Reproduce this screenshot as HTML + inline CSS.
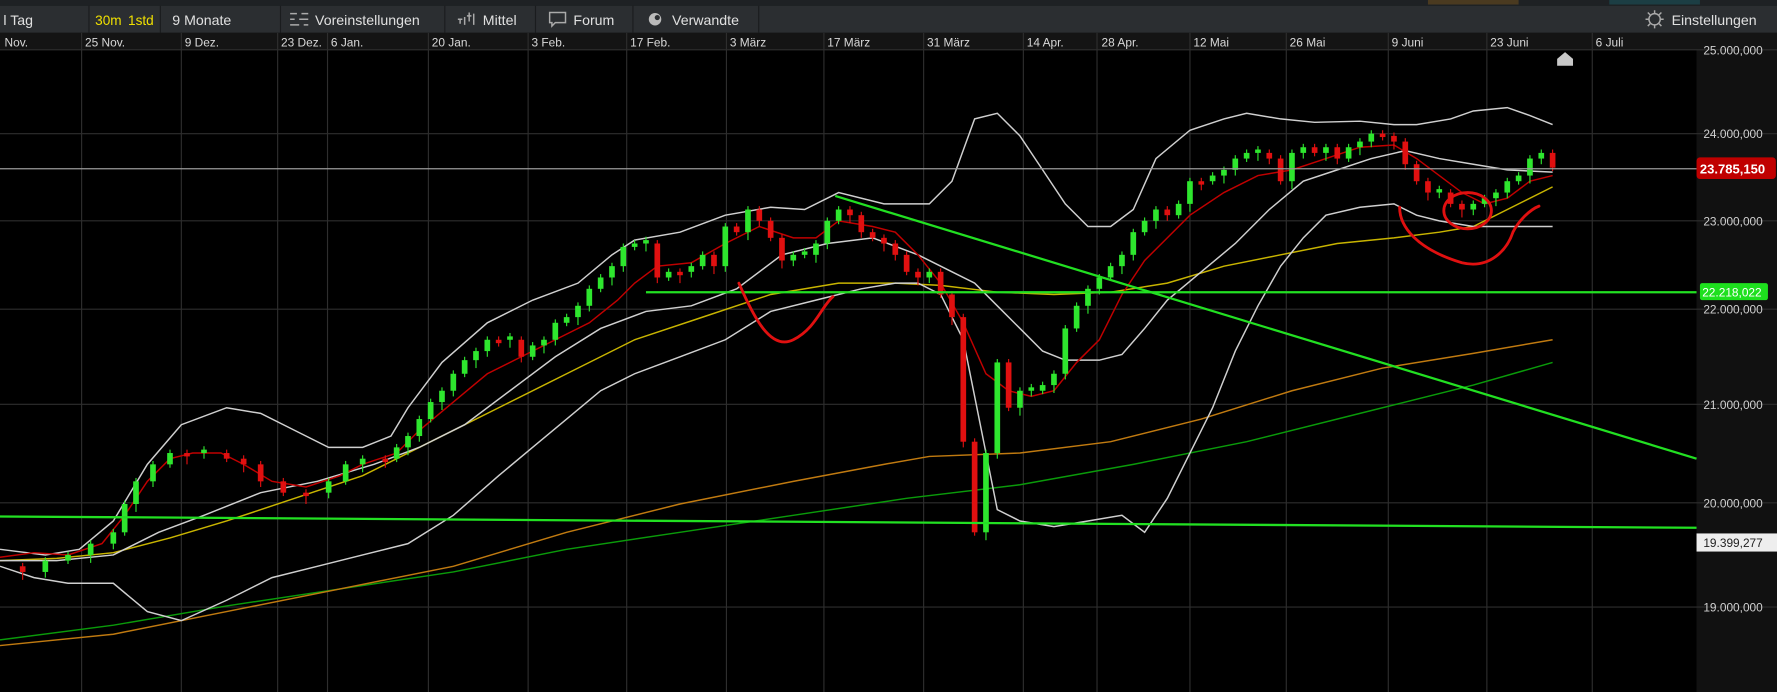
<!DOCTYPE html>
<html><head><meta charset="utf-8"><style>
html,body{margin:0;padding:0;background:#000;width:1777px;height:692px;overflow:hidden}
svg{display:block}
text{font-family:"Liberation Sans",sans-serif}
</style></head><body>
<svg id="s" width="1777" height="692" viewBox="0 0 1568 611" preserveAspectRatio="none" xmlns="http://www.w3.org/2000/svg">
<rect x="0" y="0" width="1568" height="611" fill="#000"/>
<rect x="0" y="0" width="1568" height="5" fill="#1e2124"/>
<rect x="1260" y="0" width="80" height="4" fill="#4a3a20"/><rect x="1420" y="0" width="80" height="4" fill="#1c3e44"/>
<rect x="0" y="5" width="1568" height="24" fill="#2b2e31"/>
<g fill="#1a1c1e"><rect x="78" y="5" width="1" height="24"/><rect x="141" y="5" width="1" height="24"/><rect x="247" y="5" width="1" height="24"/><rect x="392" y="5" width="1" height="24"/><rect x="472" y="5" width="1" height="24"/><rect x="558" y="5" width="1" height="24"/><rect x="669" y="5" width="1" height="24"/></g>
<g font-size="12.5" fill="#e0e0e0">
<text x="3" y="22">l Tag</text>
<text x="84" y="22" fill="#f0e000" font-size="12">30m</text>
<text x="113" y="22" fill="#f0e000" font-size="12">1std</text>
<text x="152" y="22">9 Monate</text>
<text x="278" y="22">Voreinstellungen</text>
<text x="426" y="22">Mittel</text>
<text x="506" y="22">Forum</text>
<text x="593" y="22">Verwandte</text>
<text x="1475" y="22">Einstellungen</text>
</g>
<g stroke="#aaa" stroke-width="1.3" fill="none">
<path d="M256 12h6M266 12h6M256 17h4M264 17h8M256 22h8M268 22h4"/>
<path d="M406 21v-4M410 22v-7M414 19v-8M418 22v-10M404 17h4M412 14h4"/>
<path d="M485 11h14v9h-9l-3 3v-3h-2z"/>
<circle cx="1460" cy="17" r="5"/>
<path d="M1460 9v3M1460 22v3M1452 17h3M1465 17h3M1454 11l2 2M1464 21l2 2M1454 23l2-2M1464 13l2-2"/>
</g>
<circle cx="578" cy="17" r="5.5" fill="#bbb"/><circle cx="580" cy="15.5" r="2.3" fill="#2b2e31"/>
<rect x="0" y="29" width="1568" height="15" fill="#141414"/>
<g font-size="10.5" fill="#d8d8d8">
<text x="4" y="41">Nov.</text><text x="75" y="41">25 Nov.</text><text x="163" y="41">9 Dez.</text><text x="248" y="41">23 Dez.</text><text x="292" y="41">6 Jan.</text><text x="381" y="41">20 Jan.</text><text x="469" y="41">3 Feb.</text><text x="556" y="41">17 Feb.</text><text x="644" y="41">3 März</text><text x="730" y="41">17 März</text><text x="818" y="41">31 März</text><text x="906" y="41">14 Apr.</text><text x="972" y="41">28 Apr.</text><text x="1053" y="41">12 Mai</text><text x="1138" y="41">26 Mai</text><text x="1228" y="41">9 Juni</text><text x="1315" y="41">23 Juni</text><text x="1408" y="41">6 Juli</text>
</g>
<rect x="1497" y="44" width="71" height="567" fill="#111"/>
<g stroke="#2e2e2e" stroke-width="1">
<path d="M0 44H1568M0 118H1568M0 195H1568M0 273H1568M0 357H1568M0 444H1568M0 536H1568"/>
<path d="M72 29V611M160 29V611M245 29V611M289 29V611M378 29V611M466 29V611M553 29V611M641 29V611M727 29V611M815 29V611M903 29V611M968 29V611M1050 29V611M1135 29V611M1225 29V611M1312 29V611M1405 29V611"/>
</g>
<g font-size="10.5" fill="#d0d0d0">
<text x="1503" y="48">25.000,000</text><text x="1503" y="122">24.000,000</text><text x="1503" y="199">23.000,000</text><text x="1503" y="277">22.000,000</text><text x="1503" y="361">21.000,000</text><text x="1503" y="448">20.000,000</text><text x="1503" y="540">19.000,000</text>
</g>
<g fill="none" stroke-width="1.3">
<polyline stroke="#0a9a0a" points="0,565 100,552 200,535 300,520 400,505 500,485 600,470 700,455 800,440 900,428 1000,410 1100,390 1200,365 1300,340 1370,320"/>
<polyline stroke="#c07a10" points="0,570 100,560 200,540 300,520 400,500 500,470 600,445 700,425 780,410 820,403 900,400 980,390 1060,370 1140,345 1220,325 1300,312 1370,300"/>
<polyline stroke="#c8b400" points="0,495 50,493 100,488 150,475 200,460 260,440 320,420 380,390 440,360 500,330 560,300 620,280 680,260 740,250 790,250 830,252 880,258 930,260 980,258 1030,250 1080,235 1130,225 1180,215 1230,210 1270,205 1300,200 1340,180 1370,165"/>
<polyline stroke="#cfcfcf" points="0,485 40,490 70,485 100,460 130,410 160,375 200,360 230,365 260,380 290,395 320,395 345,385 360,360 390,320 430,285 470,265 510,250 540,225 560,212 600,205 640,190 680,183 710,185 740,170 780,180 820,180 840,160 860,105 880,100 900,120 920,150 940,180 960,200 980,200 1000,185 1020,140 1050,115 1080,105 1100,100 1130,105 1160,108 1200,107 1230,110 1250,110 1280,105 1300,98 1330,95 1350,102 1370,110"/>
<polyline stroke="#cfcfcf" points="0,500 30,510 60,515 100,515 130,540 160,548 200,530 240,510 280,500 320,490 360,480 400,455 440,420 470,395 500,370 530,345 560,330 600,315 640,300 680,275 720,265 760,255 790,250 810,250 830,260 850,300 870,400 880,450 900,460 930,465 960,460 990,455 1010,470 1030,440 1050,400 1070,360 1090,310 1110,270 1130,235 1150,210 1170,190 1200,183 1230,180 1250,190 1270,195 1300,200 1330,200 1370,200"/>
<polyline stroke="#cfcfcf" points="0,495 50,495 100,490 140,470 180,455 230,435 280,425 330,410 370,395 410,375 450,345 490,315 530,290 570,275 610,270 650,255 690,225 730,215 770,210 810,225 840,240 860,250 880,270 900,290 920,310 940,318 970,318 990,313 1010,290 1030,265 1060,240 1090,215 1120,185 1150,160 1180,150 1210,140 1240,133 1270,140 1300,145 1330,150 1370,152"/>
<polyline stroke="#c00000" points="0,492 30,488 60,490 90,480 110,455 130,425 150,405 170,400 195,400 215,410 240,425 270,430 300,420 320,410 350,400 370,380 400,355 430,330 460,315 490,300 520,285 545,265 560,250 580,235 610,232 640,215 670,200 700,210 720,210 740,195 770,200 790,205 810,225 830,250 850,285 870,330 890,345 910,350 930,345 950,320 970,300 990,260 1010,230 1030,210 1050,190 1080,170 1110,155 1140,150 1170,140 1200,130 1230,128 1250,140 1270,155 1290,170 1310,180 1330,175 1350,160 1370,155"/>
</g>
<g id="candles"></g>
<line x1="0" y1="149" x2="1497" y2="149" stroke="#9a9a9a" stroke-width="1"/>
<g stroke="#22e022" stroke-width="2" fill="none">
<line x1="570" y1="258" x2="1497" y2="258"/>
<line x1="0" y1="456" x2="1497" y2="466"/>
<line x1="737" y1="173" x2="1497" y2="405"/>
</g>
<g stroke="#e01010" stroke-width="2.5" fill="none" stroke-linecap="round">
<path d="M652 250C665 280 680 310 700 300C720 290 725 270 735 262"/>
<ellipse cx="1295" cy="186" rx="21" ry="16"/>
<path d="M1235 183C1235 200 1250 220 1290 232C1315 238 1330 220 1335 205C1340 195 1350 185 1358 182"/>
</g>
<path d="M1374 58v-6l7-6 7 6v6z" fill="#c8c8c8"/>
<rect x="1497" y="139" width="70" height="19" rx="3" fill="#c00000"/>
<text x="1500" y="153" font-size="11.5" font-weight="bold" fill="#fff">23.785,150</text>
<rect x="1500" y="250" width="60" height="15" rx="2" fill="#1ee01e"/>
<text x="1502" y="262" font-size="10.5" fill="#fff">22.218,022</text>
<rect x="1497" y="471" width="71" height="16" fill="#eee"/>
<text x="1503" y="483" font-size="10.5" fill="#222">19.399,277</text>
</svg>
<script>
var p=[0,500,20,505,40,495,60,490,80,480,100,470,110,445,120,425,135,410,150,400,165,400,180,400,200,405,215,410,230,425,250,435,270,435,290,425,305,410,320,405,340,405,350,395,360,385,370,370,380,355,390,345,400,330,410,318,420,310,430,300,440,300,450,300,460,315,470,305,480,300,490,285,500,280,510,270,520,255,530,245,540,235,550,218,560,215,570,215,580,245,590,240,600,240,610,235,620,225,630,235,640,200,650,205,660,185,670,195,680,210,690,230,700,225,710,225,720,215,730,195,740,185,750,190,760,205,770,210,780,215,790,225,800,240,810,245,820,240,830,260,840,280,850,390,860,470,870,400,880,320,890,360,900,345,910,345,920,340,930,330,940,290,950,270,960,255,970,245,980,235,990,225,1000,205,1010,195,1020,185,1030,190,1040,180,1050,160,1060,160,1070,155,1080,150,1090,140,1100,135,1110,135,1120,140,1130,160,1140,135,1150,130,1160,135,1170,130,1180,140,1190,130,1200,125,1210,118,1220,120,1230,125,1240,145,1250,160,1260,170,1270,170,1280,180,1290,185,1300,180,1310,175,1320,170,1330,160,1340,155,1350,140,1360,135,1370,148];
var h='',prev=p[1];
for(var k=2;k<p.length;k+=2){var x=p[k],cl=p[k+1],o=prev;if(Math.abs(o-cl)<3){cl=o+((k/2)%2?-3:3);}
var up=cl<o,col=up?'#2ee62e':'#e01010',t=Math.min(o,cl)-3-(k*3)%6,b=Math.max(o,cl)+3+(k*5)%6;
h+='<line x1="'+x+'" y1="'+t+'" x2="'+x+'" y2="'+b+'" stroke="'+col+'" stroke-width="1"/>';
h+='<rect x="'+(x-2.5)+'" y="'+Math.min(o,cl)+'" width="5" height="'+Math.max(3,Math.abs(o-cl))+'" fill="'+col+'"/>';prev=p[k+1];}
document.getElementById('candles').innerHTML=h;
</script>
</body></html>
